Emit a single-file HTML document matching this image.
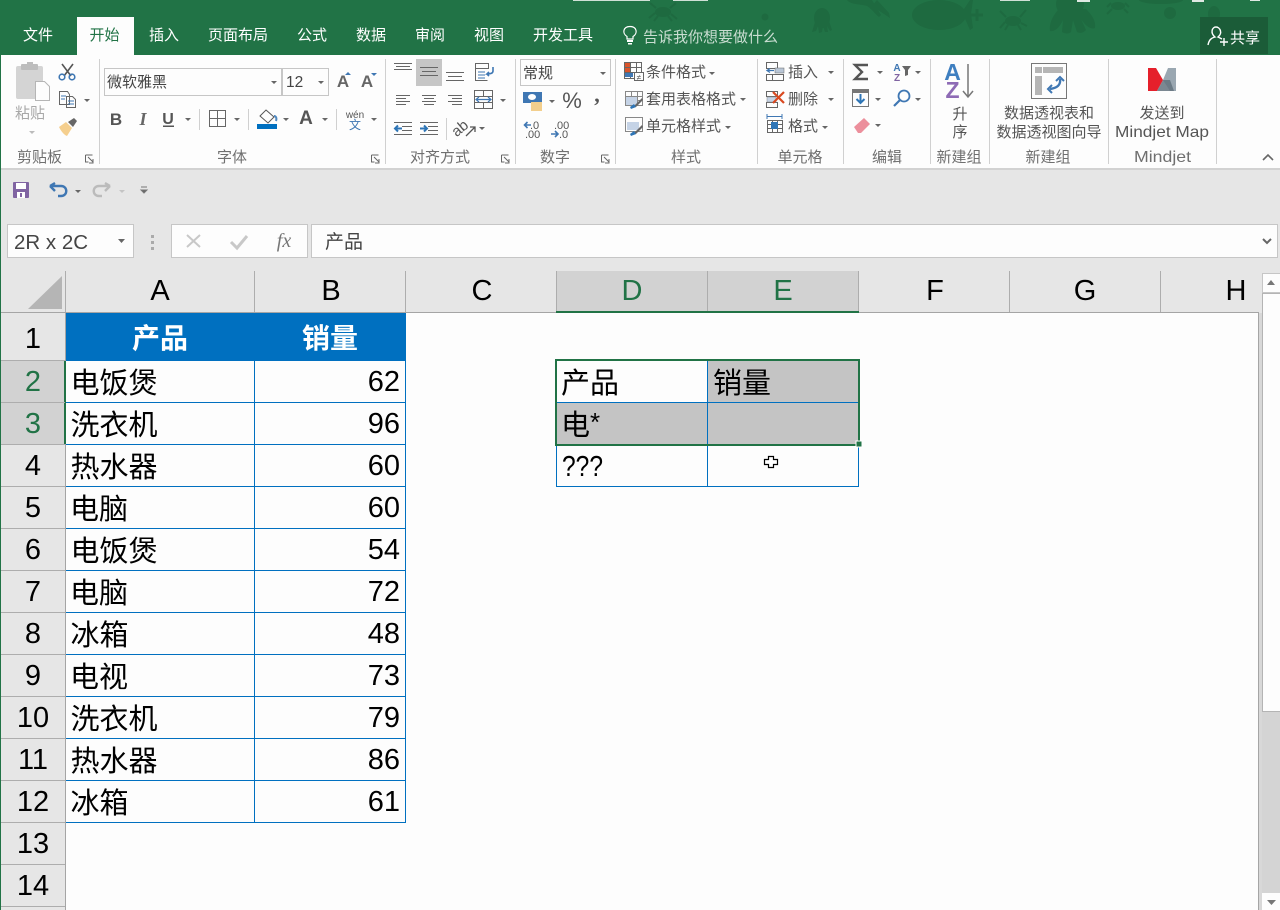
<!DOCTYPE html>
<html><head><meta charset="utf-8"><style>
html,body{margin:0;padding:0;background:#fdfdfd;width:1280px;height:910px;overflow:hidden}
svg{display:block}
text{font-family:"Liberation Sans","Noto Sans CJK SC",sans-serif}
.r{font-size:15px;fill:#555}
.l{font-size:15px;fill:#6f6f6f}
.t{font-size:15px;fill:#fff}
.c{font-size:29px;fill:#000}
.h{font-size:29px;fill:#000;text-anchor:middle}
.dd{fill:#666}
.ln{stroke:#666;stroke-width:1;fill:none}
.bl{stroke:#0070c0;stroke-width:1;fill:none}
.gl{stroke:#adadad;stroke-width:1;fill:none}
</style></head><body>
<svg width="1280" height="910" viewBox="0 0 1280 910" xmlns="http://www.w3.org/2000/svg">
<rect width="1280" height="910" fill="#fdfdfd"/>
<!-- title bar -->
<rect width="1280" height="55" fill="#217346"/>
<g fill="#1e6a40" stroke="none">
<!-- fish -->
<ellipse cx="939" cy="15" rx="27" ry="15"/><path d="M962 12l8-12 3 0-2 14 2 14-3 2z"/><path d="M971 15h12M977 9v12" stroke="#1e6a40" stroke-width="3"/>
<!-- big octopus -->
<ellipse cx="1070" cy="4" rx="14" ry="13"/><path d="M1058 10c-6 7-9 14-8 21 6 1 10-5 13-11l-1 12c3 2 7 2 9 0l2-12 4 12c4 2 7 0 9-2l-5-11c4 6 9 11 14 9 1-7-3-13-9-19z"/>
<!-- circles -->
<circle cx="1170" cy="13" r="6"/><ellipse cx="1214" cy="14" rx="6" ry="8"/>
<ellipse cx="1161" cy="0" rx="22" ry="4"/>
<circle cx="765" cy="17" r="3.500"/>
<!-- small octopus -->
<ellipse cx="822" cy="18" rx="8" ry="10"/><path d="M815 22l-3 10 4-1 2-5 1 7 3-1 1-6 2 6 3 0-1-6 3 5 2-1-3-9z"/>
<!-- crabs -->
<ellipse cx="663" cy="12" rx="8" ry="5"/><path d="M656 8l-6-5M670 8l6-5M655 13l-6 5M671 14l6 5M658 16l-4 5M668 16l4 5" stroke="#1e6a40" stroke-width="2"/>
<ellipse cx="1013" cy="21" rx="8" ry="5"/><path d="M1006 17l-6-6M1020 17l6-7M1005 22l-5 6M1021 23l6 3M1008 25l-3 5M1018 25l3 5" stroke="#1e6a40" stroke-width="2"/>
<ellipse cx="1118" cy="6" rx="7" ry="4"/><path d="M1111 3l-4 4M1125 3l4 4M1112 9l-5 5M1124 9l4 4" stroke="#1e6a40" stroke-width="2"/>
<!-- lizard -->
<path d="M847 0c4 5 14 4 20 6 5 3 8 8 12 11l2-2-9-15zM872 6l9 6 9 6-1-5-12-13z"/>
</g>
<rect x="573" y="0" width="77" height="1" fill="#cfe0d6"/><rect x="673" y="0" width="35" height="1" fill="#cfe0d6"/>
<rect x="1000" y="0" width="30" height="1" fill="#cfe0d6"/><rect x="1077" y="0" width="13" height="2" fill="#dfe9e3"/><rect x="1192" y="0" width="12" height="2" fill="#dfe9e3"/><rect x="1250" y="0" width="10" height="1" fill="#dfe9e3"/>
<rect x="77" y="17" width="57" height="38" fill="#fdfdfd"/>
<text x="38" y="40" class="t" text-anchor="middle">文件</text>
<text x="104.500" y="40" class="t" text-anchor="middle" style="fill:#217346">开始</text>
<text x="164" y="40" class="t" text-anchor="middle">插入</text>
<text x="238" y="40" class="t" text-anchor="middle">页面布局</text>
<text x="312" y="40" class="t" text-anchor="middle">公式</text>
<text x="371" y="40" class="t" text-anchor="middle">数据</text>
<text x="430" y="40" class="t" text-anchor="middle">审阅</text>
<text x="489" y="40" class="t" text-anchor="middle">视图</text>
<text x="563" y="40" class="t" text-anchor="middle">开发工具</text>
<path d="M627 39v-2.500c-5-3-4-10 3-10s8 7 3 10V39z" fill="none" stroke="#fff" stroke-width="1.200"/><rect x="627" y="40" width="6" height="2" fill="#fff"/><rect x="628" y="43" width="4" height="1.500" fill="#fff"/>
<text x="643" y="42" style="font-size:15px;fill:#c9ddd1">告诉我你想要做什么</text>
<rect x="1200" y="17" width="68" height="37" fill="#1b5c38"/>
<path d="M1208 45c1-5 3-7 7-8-5-4-3-10 1-10s7 6 2 10l4 2M1220 42h8M1224 38v8" fill="none" stroke="#fff" stroke-width="1.400"/>
<text x="1230" y="43" class="t">共享</text>

<!-- ribbon -->
<rect x="0" y="55" width="1280" height="113" fill="#fdfdfd"/>
<rect x="0" y="168" width="1280" height="2" fill="#d2d2d2"/>
<rect x="0" y="170" width="1280" height="101" fill="#e6e6e6"/>
<path d="M99.500 59v105M385.500 59v105M515.500 59v105M615.500 59v105M757.500 59v105M843.500 59v105M930.500 59v105M989.500 59v105M1108.500 59v105M1216.500 59v105" stroke="#d0d0d0" stroke-width="1" fill="none"/>
<!-- group labels -->
<text x="17" y="162" class="l">剪贴板</text>
<text x="232" y="162" class="l" text-anchor="middle">字体</text>
<text x="440" y="162" class="l" text-anchor="middle">对齐方式</text>
<text x="555" y="162" class="l" text-anchor="middle">数字</text>
<text x="686" y="162" class="l" text-anchor="middle">样式</text>
<text x="800" y="162" class="l" text-anchor="middle">单元格</text>
<text x="887" y="162" class="l" text-anchor="middle">编辑</text>
<text x="959" y="162" class="l" text-anchor="middle">新建组</text>
<text x="1048" y="162" class="l" text-anchor="middle">新建组</text>
<text x="1134" y="162" class="l" style="font-size:16px" textLength="57" lengthAdjust="spacingAndGlyphs">Mindjet</text>
<!-- launchers -->
<path d="M85.500 155v7h3M85.500 155h7M88 157l5 5M93 159v4h-4" class="ln"/>
<path d="M371.500 155v7h3M371.500 155h7M374 157l5 5M379 159v4h-4" class="ln"/>
<path d="M501.500 155v7h3M501.500 155h7M504 157l5 5M509 159v4h-4" class="ln"/>
<path d="M601.500 155v7h3M601.500 155h7M604 157l5 5M609 159v4h-4" class="ln"/>
<path d="M1263 160l5-5 5 5" fill="none" stroke="#666" stroke-width="1.600"/>

<!-- clipboard -->
<rect x="16" y="66" width="27" height="33" rx="2" fill="#d4d4d4"/><rect x="21" y="64" width="17" height="6" rx="1" fill="#bdbdbd"/><rect x="27" y="62" width="6" height="3" fill="#bdbdbd"/>
<path d="M35.500 81.500h9l5 5v14h-14z" fill="#fdfdfd" stroke="#b5b5b5"/>
<text x="15" y="118" style="font-size:15px;fill:#a8a8a8">粘贴</text>
<path d="M29 131h6l-3 3z" fill="#bbb"/>
<path d="M62 64l9 12M73 64l-9 12" stroke="#555" stroke-width="1.600" fill="none"/><circle cx="62" cy="77" r="2.800" fill="none" stroke="#3f77b3" stroke-width="1.600"/><circle cx="72" cy="77" r="2.800" fill="none" stroke="#3f77b3" stroke-width="1.600"/>
<path d="M59.500 91.500h8l2 3v10h-10zM66.500 96.500h6l3 3v8h-9z" fill="#fdfdfd" stroke="#666"/><path d="M61 96h5M61 99h4M68 101h6M68 104h6" stroke="#3f77b3"/>
<path d="M84 99h6l-3 3z" class="dd"/>
<path d="M59 127l7-5 6 6-5 8c-3-1-6-5-8-9z" fill="#f5cf8e"/><path d="M68 122l6-4 3 3-4 6z" fill="#666"/>
<!-- font -->
<rect x="104.500" y="68.500" width="177" height="27" fill="#fdfdfd" stroke="#c6c6c6"/>
<rect x="282.500" y="68.500" width="46" height="27" fill="#fdfdfd" stroke="#c6c6c6"/>
<text x="107" y="87" style="font-size:15px;fill:#444">微软雅黑</text>
<text x="286" y="87" style="font-size:15.500px;fill:#444">12</text>
<path d="M271 81h6l-3 3zM318 81h6l-3 3z" class="dd"/>
<text x="343" y="87" style="font-size:17px;font-weight:bold;fill:#666" text-anchor="middle">A</text>
<text x="367" y="87" style="font-size:17px;font-weight:bold;fill:#666" text-anchor="middle">A</text>
<path d="M345 75l3-3 3 3z" fill="#3f77b3"/><path d="M371 73h6l-3 3z" fill="#3f77b3"/>
<text x="116" y="125" style="font-size:17px;font-weight:bold;fill:#555" text-anchor="middle">B</text>
<text x="143" y="125" style="font-size:18px;font-weight:bold;font-style:italic;fill:#666;font-family:'Liberation Serif',serif" text-anchor="middle">I</text>
<text x="168" y="124" style="font-size:16px;font-weight:bold;fill:#555" text-anchor="middle">U</text>
<rect x="163" y="125.500" width="11" height="1.500" fill="#555"/>
<path d="M185 118h6l-3 3z" class="dd"/>
<path d="M209.500 110.500h16v16h-16zM217.500 110.500v16M209.500 118.500h16" class="ln"/>
<path d="M234 118h6l-3 3z" class="dd"/>
<path d="M199.500 109v21M248.500 109v21M336.500 109v21" stroke="#d0d0d0" fill="none"/>
<path d="M266 110l8 7-6 6-8-7z" fill="#fdfdfd" stroke="#555"/><path d="M274 116c2 0 3 2 2 5" stroke="#4f88c0" stroke-width="2" fill="none"/>
<rect x="257" y="124" width="20" height="5" fill="#0070c0"/>
<path d="M283 118h6l-3 3z" class="dd"/>
<text x="306" y="124" style="font-size:19px;font-weight:bold;fill:#555" text-anchor="middle">A</text>
<path d="M322 118h6l-3 3z" class="dd"/>
<text x="355" y="118" style="font-size:10px;fill:#555" text-anchor="middle">wén</text>
<text x="355" y="129" style="font-size:12px;fill:#3f77b3" text-anchor="middle">文</text>
<path d="M371 118h6l-3 3z" class="dd"/>
<!-- alignment -->
<rect x="416" y="59" width="26" height="27" fill="#c6c6c6"/>
<path d="M394 63.500h18M396 66.500h14M394 69.500h18M420 67.500h18M422 71.500h14M420 75.500h18M446 72.500h18M448 76.500h14M446 80.500h18" class="ln"/>
<path d="M396 95.500h14M396 98.500h10M396 101.500h14M396 104.500h10M422 95.500h14M424 98.500h10M422 101.500h14M424 104.500h10M448 95.500h14M452 98.500h10M448 101.500h14M452 104.500h10" class="ln"/>
<path d="M475.500 63.500h13v5h-13zM475.500 68.500v12h12" class="ln"/><path d="M478 72h7M478 75h7M478 78h7" stroke="#3f77b3" fill="none"/><path d="M493 67v4c0 2-2 3-6 3l2-2m-2 2l2 2" stroke="#3f77b3" stroke-width="1.600" fill="none"/>
<path d="M474.500 90.500h18v18h-18zM474.500 96.500h18M474.500 102.500h18M483.500 90.500v6M483.500 102.500v6" class="ln"/><path d="M477 99.500h13M479 97l-3 2.500 3 2.500M488 97l3 2.500-3 2.500" stroke="#3f77b3" fill="none" stroke-width="1.200"/>
<path d="M500 99h6l-3 3z" class="dd"/>
<path d="M394 122.500h18M402 126.500h10M402 130.500h10M394 134.500h18M420 122.500h18M428 126.500h10M428 130.500h10M420 134.500h18" class="ln"/>
<path d="M402 128.500h-7m3-3l-3 3 3 3" stroke="#2e75b6" stroke-width="2" fill="none"/><path d="M420 128.500h7m-3-3l3 3-3 3" stroke="#2e75b6" stroke-width="2" fill="none"/>
<path d="M446.500 118v22" stroke="#d0d0d0" fill="none"/>
<text x="463" y="132" transform="rotate(-40 463 132)" style="font-size:15px;fill:#555" text-anchor="middle">ab</text><path d="M466 136l9-9m-5 0h5v5" stroke="#555" stroke-width="1.300" fill="none"/>
<path d="M479 127h6l-3 3z" class="dd"/>
<!-- number -->
<rect x="520.500" y="59.500" width="90" height="26" fill="#fdfdfd" stroke="#c6c6c6"/>
<text x="523" y="78" style="font-size:15px;fill:#444">常规</text>
<path d="M600 72h6l-3 3z" class="dd"/>
<rect x="523" y="92" width="19" height="11" fill="#3f77b3"/><ellipse cx="532" cy="97" rx="4" ry="3" fill="#fff"/><rect x="531" y="102" width="11" height="9" fill="#f3cf8d"/>
<path d="M549 100h6l-3 3z" class="dd"/>
<text x="572" y="108" style="font-size:22px;fill:#555" text-anchor="middle">%</text>
<text x="597" y="102" style="font-size:22px;font-weight:bold;fill:#555;font-family:'Liberation Serif',serif" text-anchor="middle">,</text>
<text x="530" y="129" style="font-size:11px;fill:#555">.0</text><text x="525" y="138" style="font-size:11px;fill:#555">.00</text>
<path d="M531 125h-6m2.500-3l-3 3 3 3" stroke="#3f77b3" stroke-width="1.600" fill="none"/>
<text x="554" y="129" style="font-size:11px;fill:#555">.00</text><text x="559" y="138" style="font-size:11px;fill:#555">.0</text>
<path d="M551 134h7m-3-3l3 3-3 3" stroke="#3f77b3" stroke-width="1.600" fill="none"/>
<!-- styles -->
<path d="M624.500 62.500h17v16h-17zM630.500 62.500v16M636.500 62.500v16M624.500 67.500h17M624.500 72.500h17" class="ln"/><rect x="625" y="63" width="5" height="4" fill="#d9542b"/><rect x="625" y="68" width="5" height="4" fill="#d9542b"/><rect x="625" y="73" width="8" height="4" fill="#3f77b3"/>
<rect x="634.500" y="72.500" width="9" height="8" fill="#fdfdfd" stroke="#666"/><text x="639" y="80" style="font-size:8px;fill:#555" text-anchor="middle">≠</text>
<text x="646" y="77" class="r">条件格式</text><path d="M709 72h6l-3 3z" class="dd"/>
<path d="M625.500 91.500h17v14h-17zM631.500 91.500v14M637.500 91.500v14M625.500 96.500h17M625.500 100.500h17" stroke="#888" fill="none"/><rect x="626" y="97" width="11" height="8" fill="#c5d3e6"/><path d="M642 98l-7 7-2 3 3-1 7-7z" fill="#666"/><path d="M630 107l4-3 2 3-5 2z" fill="#2e75b6"/>
<text x="646" y="104" class="r">套用表格格式</text><path d="M740 98h6l-3 3z" class="dd"/>
<path d="M625.500 117.500h17v14h-17z" stroke="#888" fill="none"/><rect x="627" y="122" width="12" height="8" fill="#c5d3e6"/><path d="M642 125l-7 7-2 3 3-1 7-7z" fill="#666"/><path d="M630 134l4-3 2 3-5 2z" fill="#2e75b6"/>
<text x="646" y="131" class="r">单元格样式</text><path d="M725 126h6l-3 3z" class="dd"/>
<!-- cells -->
<path d="M766.500 62.500h11v6h-11zM766.500 74.500h17v6h-17zM772.500 74.500v6" class="ln"/><rect x="775" y="68" width="9" height="5" fill="#b9c6d6" stroke="#666" stroke-width=".5"/><path d="M774 70.500h-6m2-2l-3 2 3 2" stroke="#3f77b3" stroke-width="1.300" fill="none"/>
<text x="788" y="77" class="r">插入</text><path d="M828 71h6l-3 3z" class="dd"/>
<path d="M766.500 91.500h11v5h-11zM766.500 102.500h11v5h-11z" class="ln"/><rect x="767" y="97" width="9" height="5" fill="#c5d3e6" stroke="#888" stroke-width=".5"/><path d="M773 92l11 11M784 92l-11 11" stroke="#d9481f" stroke-width="2.200"/>
<text x="788" y="104" class="r">删除</text><path d="M828 98h6l-3 3z" class="dd"/>
<path d="M767 116.500h15M767 114v5M782 114v5" stroke="#3f77b3" fill="none"/><path d="M767.500 120.500h15v12h-15zM772.500 120.500v12M777.500 120.500v12M767.500 124.500h15M767.500 128.500h15" class="ln"/><rect x="771" y="122" width="7" height="7" fill="#2e75b6"/>
<text x="788" y="131" class="r">格式</text><path d="M822 126h6l-3 3z" class="dd"/>
<!-- editing -->
<path d="M868 65h-13l7 7-7 7h13" stroke="#555" stroke-width="2.400" fill="none"/>
<path d="M877 71h6l-3 3z" class="dd"/>
<text x="897" y="71" style="font-size:10px;font-weight:bold;fill:#3f77b3" text-anchor="middle">A</text><text x="897" y="81" style="font-size:10px;font-weight:bold;fill:#8064a2" text-anchor="middle">Z</text>
<path d="M902 66h9l-3 4v5l-3 1v-6z" fill="#666"/><path d="M915 71h6l-3 3z" class="dd"/>
<rect x="852.500" y="89.500" width="16" height="17" fill="#fdfdfd" stroke="#777"/><rect x="853" y="90" width="15" height="3" fill="#777"/><path d="M860.500 94v9m-4-4l4 4 4-4" stroke="#2e75b6" stroke-width="2" fill="none"/>
<path d="M875 98h6l-3 3z" class="dd"/>
<circle cx="904" cy="96" r="5.500" fill="none" stroke="#3f77b3" stroke-width="1.800"/><path d="M900 100l-6 6" stroke="#3f77b3" stroke-width="2.200"/>
<path d="M915 98h6l-3 3z" class="dd"/>
<path d="M854 127l10-9 6 6-9 9h-3z" fill="#ec8f9c"/><path d="M875 124h6l-3 3z" class="dd"/>
<!-- sort -->
<text x="952.500" y="80" style="font-size:23px;fill:#3f7fc0;font-weight:bold" text-anchor="middle">A</text>
<text x="952.500" y="98" style="font-size:23px;fill:#8e6bb5;font-weight:bold" text-anchor="middle">Z</text>
<path d="M968 64v33m-5-6l5 6 5-6" stroke="#777" stroke-width="1.500" fill="none"/>
<text x="960" y="119" class="r" text-anchor="middle">升</text><text x="960" y="137" class="r" text-anchor="middle">序</text>
<!-- pivot -->
<rect x="1031.500" y="63.500" width="35" height="35" fill="#fdfdfd" stroke="#777"/>
<rect x="1035" y="67" width="7" height="6" fill="#b5b5b5"/><rect x="1043" y="67" width="20" height="6" fill="#b5b5b5"/><rect x="1035" y="76" width="7" height="19" fill="#b5b5b5"/>
<path d="M1060 79c1 6-3 9-10 10" stroke="#3f77b3" stroke-width="2.400" fill="none"/><path d="M1056 81l4-4 4 4M1052 85l-4 4 4 4" stroke="#3f77b3" stroke-width="2" fill="none"/>
<text x="1049" y="118" class="r" text-anchor="middle">数据透视表和</text>
<text x="1049" y="137" class="r" text-anchor="middle">数据透视图向导</text>
<!-- mindjet -->
<path d="M1148 68h8l7 12-6 11h-9z" fill="#e5202b"/><path d="M1176 68h-8l-5 12 7 11h6z" fill="#9aa7b1"/><path d="M1163 80l-6 11h17l-4-11z" fill="#64737f" opacity=".85"/>
<text x="1162" y="118" class="r" text-anchor="middle">发送到</text>
<text x="1115" y="137" class="r" style="font-size:16px" textLength="94" lengthAdjust="spacingAndGlyphs">Mindjet Map</text>
<!-- left edge -->
<rect x="0" y="55" width="1" height="855" fill="#217346"/>

<!-- qat -->
<rect x="13" y="182" width="16" height="16" rx="1" fill="#8064a2"/><rect x="16" y="183" width="10" height="6" fill="#fff"/><rect x="17" y="192" width="8" height="6" fill="#fff"/><rect x="20" y="193" width="2" height="4" fill="#8064a2"/>
<path d="M52 186h9c7 0 7 10 0 10h-3M50 186l5-3M50 186l5 5" stroke="#3f77b3" stroke-width="2.400" fill="none"/>
<path d="M75 190h6l-3 3z" class="dd"/>
<path d="M108 186h-9c-7 0-7 10 0 10h3M110 186l-5-3M110 186l-5 5" stroke="#bbb" stroke-width="2.400" fill="none"/>
<path d="M119 190h6l-3 3z" fill="#c4c4c4"/>
<path d="M141 187h6M141 190h6l-3 3z" stroke="#777" fill="#666" stroke-width="1"/>

<!-- formula bar -->
<rect x="7.500" y="224.500" width="126" height="33" fill="#fdfdfd" stroke="#c6c6c6"/>
<text x="14" y="249" style="font-size:20.500px;fill:#444">2R x 2C</text>
<path d="M118 239h7l-3.500 4z" class="dd"/>
<path d="M152.500 235v3M152.500 241v3M152.500 247v3" stroke="#aaa" stroke-width="3" fill="none"/>
<rect x="171.500" y="224.500" width="136" height="33" fill="#fdfdfd" stroke="#c6c6c6"/>
<path d="M187 235l13 12M200 235l-13 12" stroke="#c8c8c8" stroke-width="2" fill="none"/>
<path d="M231 242l6 6 10-12" stroke="#c8c8c8" stroke-width="3" fill="none"/>
<text x="284" y="247" style="font-size:20px;font-style:italic;fill:#777;font-family:'Liberation Serif',serif" text-anchor="middle">fx</text>
<rect x="311.500" y="224.500" width="966" height="33" fill="#fdfdfd" stroke="#c6c6c6"/>
<text x="325" y="248" style="font-size:19px;fill:#444">产品</text>
<path d="M1263 239l4 4 4-4" stroke="#666" stroke-width="2" fill="none"/>

<!-- column headers -->
<rect x="1" y="271" width="1279" height="41" fill="#e6e6e6"/>
<rect x="1" y="312" width="65" height="598" fill="#e6e6e6"/>
<rect x="1259" y="312" width="21" height="598" fill="#e6e6e6"/>
<path d="M28 309L62 276V309z" fill="#b5b5b5"/>
<rect x="556" y="271" width="303" height="41" fill="#d2d2d2"/>
<path d="M65.500 271v41M254.500 271v41M405.500 271v41M556.500 271v41M707.500 271v41M858.500 271v41M1009.500 271v41M1160.500 271v41" class="gl"/>
<path d="M1 312.500h1258" stroke="#a5a5a5"/>
<rect x="556" y="311" width="303" height="2" fill="#217346"/>
<text x="160" y="300" class="h">A</text><text x="331" y="300" class="h">B</text><text x="482" y="300" class="h">C</text>
<text x="632" y="300" class="h" style="fill:#217346">D</text><text x="783" y="300" class="h" style="fill:#217346">E</text>
<text x="935" y="300" class="h">F</text><text x="1085" y="300" class="h">G</text><text x="1236" y="300" class="h">H</text>

<!-- row headers -->
<rect x="1" y="361" width="64" height="83" fill="#d2d2d2"/>
<path d="M65.500 313V910" stroke="#a5a5a5"/>
<rect x="64" y="361" width="2" height="83" fill="#217346"/>
<path d="M1 360.500h64M1 402.500h64M1 444.500h64M1 486.500h64M1 528.500h64M1 570.500h64M1 612.500h64M1 654.500h64M1 696.500h64M1 738.500h64M1 780.500h64M1 822.500h64M1 864.500h64M1 906.500h64" class="gl"/>
<text x="33" y="348" class="h">1</text>
<text x="33" y="391" class="h" style="fill:#217346">2</text>
<text x="33" y="433" class="h" style="fill:#217346">3</text>
<text x="33" y="475" class="h">4</text><text x="33" y="517" class="h">5</text><text x="33" y="559" class="h">6</text>
<text x="33" y="601" class="h">7</text><text x="33" y="643" class="h">8</text><text x="33" y="685" class="h">9</text>
<text x="33" y="727" class="h">10</text><text x="33" y="769" class="h">11</text><text x="33" y="811" class="h">12</text>
<text x="33" y="853" class="h">13</text><text x="33" y="895" class="h">14</text>

<!-- table 1 -->
<rect x="66" y="313" width="340" height="48" fill="#0070c0"/>
<path d="M66 402.500h340M66 444.500h340M66 486.500h340M66 528.500h340M66 570.500h340M66 612.500h340M66 654.500h340M66 696.500h340M66 738.500h340M66 780.500h340M66 822.500h340M254.500 361v462M405.500 361v462" class="bl"/>
<text x="160" y="348" style="font-size:28px;font-weight:bold;fill:#fff" text-anchor="middle">产品</text>
<text x="330" y="348" style="font-size:28px;font-weight:bold;fill:#fff" text-anchor="middle">销量</text>
<g class="c">
<text x="70.500" y="393">电饭煲</text><text x="70.500" y="435">洗衣机</text><text x="70.500" y="477">热水器</text><text x="70" y="519">电脑</text>
<text x="70.500" y="561">电饭煲</text><text x="70" y="603">电脑</text><text x="70.500" y="645">冰箱</text><text x="70" y="687">电视</text>
<text x="70.500" y="729">洗衣机</text><text x="70.500" y="771">热水器</text><text x="70.500" y="813">冰箱</text>
</g>
<g class="c" text-anchor="end">
<text x="400" y="391">62</text><text x="400" y="433">96</text><text x="400" y="475">60</text><text x="400" y="517">60</text>
<text x="400" y="559">54</text><text x="400" y="601">72</text><text x="400" y="643">48</text><text x="400" y="685">73</text>
<text x="400" y="727">79</text><text x="400" y="769">86</text><text x="400" y="811">61</text>
</g>

<!-- table 2 -->
<rect x="708" y="361" width="150" height="41" fill="#c4c4c4"/>
<rect x="557" y="403" width="301" height="41" fill="#c4c4c4"/>
<path d="M556.500 444v42.500h302V444M707.500 361v125.500M557 402.500h301" class="bl"/>
<rect x="556" y="360" width="303" height="85" fill="none" stroke="#217346" stroke-width="2"/>
<rect x="856" y="441" width="6" height="6" fill="#217346" stroke="#fff" stroke-width="1"/>
<g class="c">
<text x="561" y="393">产品</text><text x="713" y="393">销量</text><text x="561" y="435">电</text><text x="590" y="431" style="font-size:26px">*</text><text x="562" y="476" textLength="41" lengthAdjust="spacingAndGlyphs">???</text>
</g>
<path d="M768.500 456.500h5v3h4v5h-4v3h-5v-3h-4v-5h4z" fill="#fff" stroke="#000" stroke-width="1.200"/>

<!-- scrollbar -->
<path d="M1258.500 313V910" stroke="#a5a5a5"/>
<rect x="1259" y="313" width="3" height="597" fill="#d8d8d8"/>
<rect x="1262" y="273" width="18" height="637" fill="#d4d4d4"/>
<rect x="1262.500" y="273.500" width="18" height="19" fill="#fdfdfd" stroke="#c6c6c6"/>
<path d="M1267 285h8l-4-5z" fill="#777"/>
<rect x="1262.500" y="293.500" width="18" height="418" fill="#fdfdfd" stroke="#b4b4b4"/>
<rect x="1262" y="893" width="18" height="17" fill="#fdfdfd"/>
<path d="M1267 900h9l-4.500 5z" fill="#777"/>
</svg>
</body></html>
